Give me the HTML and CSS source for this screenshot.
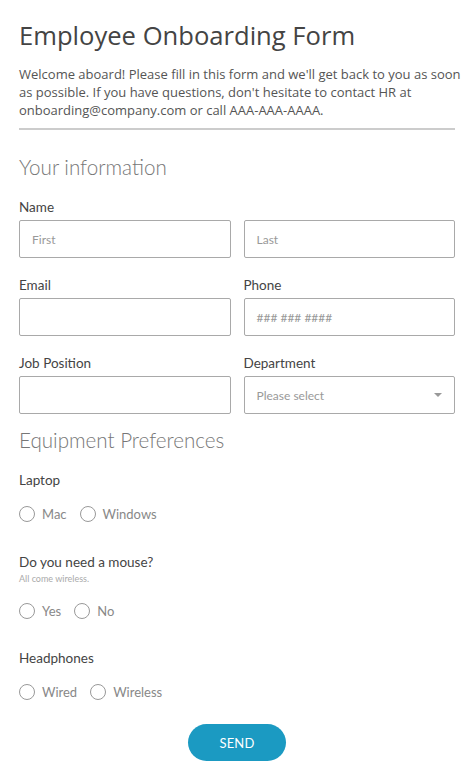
FILE: index.html
```html
<!DOCTYPE html>
<html>
<head>
<meta charset="utf-8">
<link rel="stylesheet" href="styles.css">
</head>
<body>
<form class="form">
  <h1 class="title">Employee Onboarding Form</h1>
  <p class="intro">Welcome aboard! Please fill in this form and we'll get back to you as soon as possible. If you have questions, don't hesitate to contact HR at onboarding@company.com or call AAA-AAA-AAAA.</p>
  <hr class="divider">
  <h2 class="section">Your information</h2>

  <div class="field">
    <div class="label">Name</div>
    <div class="row">
      <div class="input"><span class="ph">First</span></div>
      <div class="input"><span class="ph">Last</span></div>
    </div>
  </div>

  <div class="row">
    <div class="field">
      <div class="label">Email</div>
      <div class="input"></div>
    </div>
    <div class="field">
      <div class="label">Phone</div>
      <div class="input"><span class="ph">### ### ####</span></div>
    </div>
  </div>

  <div class="row">
    <div class="field">
      <div class="label">Job Position</div>
      <div class="input"></div>
    </div>
    <div class="field">
      <div class="label">Department</div>
      <div class="input select"><span class="ph">Please select</span><span class="caret"></span></div>
    </div>
  </div>

  <h2 class="section section2">Equipment Preferences</h2>

  <div class="group">
    <div class="label">Laptop</div>
    <div class="radios">
      <span class="radio"><span class="circle"></span>Mac</span>
      <span class="radio"><span class="circle"></span>Windows</span>
    </div>
  </div>

  <div class="group">
    <div class="label">Do you need a mouse?</div>
    <div class="hint">All come wireless.</div>
    <div class="radios">
      <span class="radio"><span class="circle"></span>Yes</span>
      <span class="radio"><span class="circle"></span>No</span>
    </div>
  </div>

  <div class="group">
    <div class="label">Headphones</div>
    <div class="radios">
      <span class="radio"><span class="circle"></span>Wired</span>
      <span class="radio"><span class="circle"></span>Wireless</span>
    </div>
  </div>

  <div class="actions"><button type="button" class="send">SEND</button></div>
</form>
</body>
</html>
```
FILE: styles.css
```css
html, body {
  margin: 0;
  padding: 0;
  background: #fff;
}
.form {
  padding: 18px 19px 0 19px;
  font-family: "Lato", "Noto Sans", sans-serif;
}
.title {
  font-family: "Open Sans", sans-serif;
  font-weight: 400;
  font-size: 25.6px;
  line-height: 36px;
  color: #444;
  margin: 0;
}
.intro {
  font-family: "Open Sans", sans-serif;
  font-size: 13px;
  line-height: 18px;
  color: #555;
  margin: 11px -6px 0 0;
}
.divider {
  border: 0;
  border-top: 2px solid #ccc;
  margin: 9px 0 0 0;
}
.section {
  font-weight: 300;
  font-size: 20.6px;
  line-height: 28px;
  color: #777;
  margin: 23px 0 0 0;
}
.section2 {
  margin-top: 12px;
}
.label {
  font-size: 13.5px;
  line-height: 18px;
  color: #444;
}
.field {
  margin-top: 17px;
}
.row .field { margin-top: 0; }
.row {
  display: grid;
  grid-template-columns: 1fr 1fr;
  column-gap: 13px;
}
.field > .row { margin-top: 4px; }
.row + .row { margin-top: 18px; }
.field + .row { margin-top: 18px; }
.row .field .input { margin-top: 4px; }
.input {
  height: 38px;
  box-sizing: border-box;
  border: 1px solid #a9a9a9;
  border-radius: 2px;
  display: flex;
  align-items: center;
  padding: 0 12px;
  position: relative;
}
.ph {
  font-size: 12px;
  color: #999;
}
.select { justify-content: space-between; }
.caret {
  width: 0;
  height: 0;
  border-left: 4px solid transparent;
  border-right: 4px solid transparent;
  border-top: 4px solid #999;
}
.group {
  margin-top: 17px;
}
.group + .group { margin-top: 30px; }
.group + .group + .group { margin-top: 29px; }
.hint {
  font-size: 9px;
  line-height: 12px;
  color: #aaa;
  margin-top: 2px;
}
.radios {
  display: flex;
  gap: 13px;
  margin-top: 16px;
}
.group .hint + .radios { margin-top: 17px; }
.radio {
  display: flex;
  align-items: center;
  gap: 7px;
  font-size: 13px;
  color: #888;
  line-height: 18px;
}
.circle {
  width: 14px;
  height: 14px;
  border: 1px solid #999;
  border-radius: 50%;
  display: inline-block;
}
.actions {
  display: flex;
  justify-content: center;
  margin-top: 23px;
}
.send {
  width: 98px;
  height: 37px;
  border: 0;
  border-radius: 19px;
  background: #1b9ac2;
  color: #fff;
  font-family: "Lato", sans-serif;
  font-size: 13px;
  letter-spacing: 0.2px;
}
```
